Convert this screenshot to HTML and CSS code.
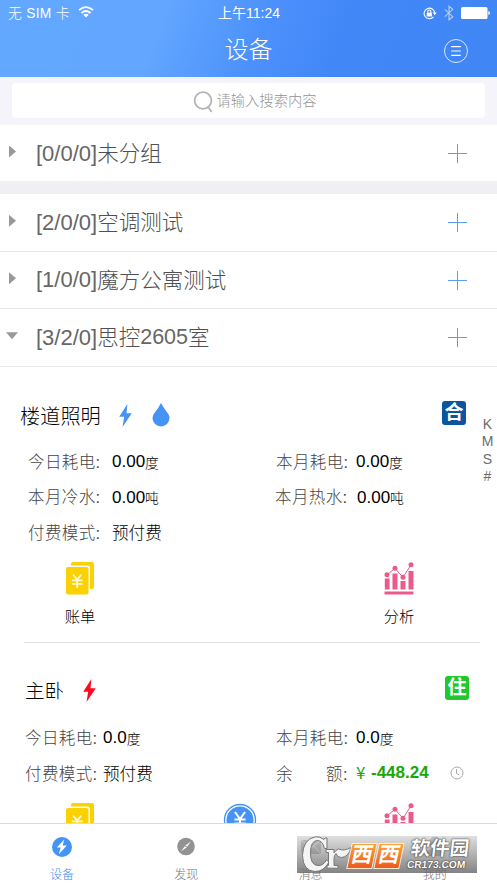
FILE: index.html
```html
<!DOCTYPE html>
<html lang="zh-CN">
<head>
<meta charset="utf-8">
<title>设备</title>
<link rel="stylesheet" href="styles.css">
</head>
<body>
<svg class="defs" aria-hidden="true">
  <symbol id="bolt" viewBox="0 0 12 22"><path d="M7.8 0 0 12.2h4.7L3.2 22 12 8.8H7z"/></symbol>
  <symbol id="bill" viewBox="0 0 28 33">
    <path fill="#fcd100" d="M7 0h19q2 0 2 2v23q0 2-2 2h-2V6q0-2.500-2.500-2.500H5V2q0-2 2-2z"/>
    <rect fill="#fcd100" y="5" width="22.500" height="27.500" rx="2"/>
    <path fill="none" stroke="#fff9dc" stroke-width="1.800" d="m7 12.500 4.200 5 4.200-5M11.200 17.500V26M5.800 18.300h10.800M5.800 21.800h10.800"/>
  </symbol>
  <symbol id="chart" viewBox="0 0 30 33">
    <path fill="#ec5a8c" d="M.8 16.500h4.800V27.500H.8zM8.500 11.500h5V27.500h-5zM16.500 19h5v8.500h-5zM24.500 9h5v18.500h-5zM.5 29.500h29V32.500H.5z"/>
    <path fill="none" stroke="#ec5a8c" d="m3 12.800 8-6.500 8 9 8-12.500"/>
    <g fill="#ec5a8c"><circle cx="3" cy="12.800" r="2.500"/><circle cx="11" cy="6.200" r="2.500"/><circle cx="19" cy="15.200" r="2.500"/><circle cx="27" cy="2.700" r="2.500"/></g>
  </symbol>
</svg>
<div class="app">
  <header class="header">
    <div class="status">
      <div class="carrier"><span>无 SIM 卡</span>
        <svg width="16" height="12" viewBox="0 0 16 12" fill="none" stroke="#fff" stroke-width="1.800"><path d="M1 4.200Q8-2 15 4.200M3.500 7Q8 3 12.500 7"/><path fill="#fff" stroke="none" d="M5.300 8.700Q8 6.600 10.700 8.700L8 11.500z"/></svg>
      </div>
      <div class="time">上午11:24</div>
      <div class="indicators">
        <svg width="14" height="13" viewBox="0 0 14 13" fill="none" stroke="#fff" stroke-width="1.100"><path d="M10.500 9.800A5.300 5.300 0 1 1 11.700 6"/><path fill="#fff" stroke="none" d="M9.700 5.500h4L11.700 8.300zM3.700 5.800h5.200v3.700H3.700z"/><path d="M4.800 6V4.500a1.500 1.500 0 0 1 3 0V6"/></svg>
        <svg class="bt" width="10" height="16" viewBox="0 0 10 16" fill="none" stroke="#fff" stroke-width="1.100"><path d="m.8 4.300 8 7.400L5 14.800V1.200l3.800 3.100-8 7.400"/></svg>
        <svg width="29" height="12" viewBox="0 0 29 12" fill="#fff"><rect width="26.500" height="12" rx="1.500"/><path d="M27.300 4q1.700.5 1.700 2t-1.700 2z"/></svg>
      </div>
    </div>
    <div class="titlebar">
      <h1>设备</h1>
      <svg width="26" height="26" viewBox="0 0 26 26" fill="none" stroke="#fff"><circle cx="13" cy="13" r="11.500" stroke-opacity=".8"/><path stroke-width="1.200" d="M8.200 8.700h9.600M8.200 13h9.600M8.200 17.300h9.600"/></svg>
    </div>
  </header>
  <div class="search"><div class="field">
    <svg width="21" height="22" viewBox="0 0 21 22" fill="none" stroke="#b3b3b3" stroke-width="1.800"><circle cx="10" cy="9.500" r="8.400"/><path d="m14.800 15.500 4 5.500"/></svg>
    <span>请输入搜索内容</span>
  </div></div>
  <ul class="groups">
    <li class="group first"><i class="arrow"></i><b>[0/0/0]</b><span>未分组</span><i class="plus"></i></li>
    <li class="group"><i class="arrow"></i><b>[2/0/0]</b><span>空调测试</span><i class="plus"></i></li>
    <li class="group"><i class="arrow"></i><b>[1/0/0]</b><span>魔方公寓测试</span><i class="plus"></i></li>
    <li class="group"><i class="arrow open"></i><b>[3/2/0]</b><span>思控</span><b class="num">2605</b><span>室</span><i class="plus"></i></li>
  </ul>
  <main class="devices">
    <section class="device">
      <div class="name"><h2>楼道照明</h2>
        <svg class="bolt" width="13" height="23"><use href="#bolt"/></svg>
        <svg class="drop" width="18" height="24" viewBox="0 0 18 24"><path fill="#4593f5" d="M9 0Q11 4 14.500 8.500T17.500 15A8.500 8.500 0 0 1 .5 15Q.5 12 3.500 8.500T9 0z"/></svg>
        <span class="tag common">合</span>
      </div>
      <div class="stats">
        <div class="stat"><label>今日耗电:</label><b>0.00</b><small>度</small></div>
        <div class="stat"><label>本月耗电:</label><b>0.00</b><small>度</small></div>
        <div class="stat"><label>本月冷水:</label><b>0.00</b><small>吨</small></div>
        <div class="stat hot"><label>本月热水:</label><b>0.00</b><small>吨</small></div>
        <div class="stat"><label>付费模式:</label><span class="mode">预付费</span></div>
      </div>
      <div class="actions">
        <a><svg width="28" height="33"><use href="#bill"/></svg><span>账单</span></a>
        <a></a>
        <a><svg width="30" height="33"><use href="#chart"/></svg><span>分析</span></a>
      </div>
    </section>
    <section class="device second">
      <div class="name"><h2>主卧</h2>
        <svg class="bolt" width="13" height="23"><use href="#bolt"/></svg>
        <span class="tag room">住</span>
      </div>
      <div class="stats">
        <div class="stat"><label>今日耗电:</label><b>0.0</b><small>度</small></div>
        <div class="stat"><label>本月耗电:</label><b>0.0</b><small>度</small></div>
        <div class="stat"><label>付费模式:</label><span class="mode">预付费</span></div>
        <div class="stat"><label class="spread"><span>余</span><span>额:</span></label><strong><em>¥</em>-448.24</strong>
          <svg class="clock" width="14" height="14" viewBox="0 0 14 14" fill="none" stroke="#aaa"><circle cx="7" cy="7" r="6"/><path d="M6.500 3v4.500L9.500 9"/></svg></div>
      </div>
      <div class="actions">
        <a><svg width="28" height="33"><use href="#bill"/></svg></a>
        <a><svg width="34" height="34" viewBox="0 0 34 34"><circle cx="17" cy="17" r="15.500" fill="#fff" stroke="#4593f5" stroke-width="1.300"/><circle cx="17" cy="17" r="13.500" fill="#4593f5"/><path fill="none" stroke="#fff" stroke-width="2" d="m12 9 5 7 5-7M17 16v10M11.500 16.500h11M11.500 20.500h11"/></svg></a>
        <a><svg width="30" height="33"><use href="#chart"/></svg></a>
      </div>
    </section>
  </main>
  <nav class="tabs">
    <a class="tab active"><svg width="22" height="22" viewBox="0 0 22 22"><circle cx="11" cy="11" r="10" fill="#4593f5"/><path fill="#fff" d="m13.300 3.500-7.500 8h3.900l-1.900 6.800 8-8.700h-4.200z"/></svg><span>设备</span></a>
    <a class="tab"><svg width="22" height="22" viewBox="0 0 22 22"><circle cx="11" cy="10.500" r="8.800" fill="#929292"/><path fill="#fff" d="m16 5.500-4.300 5.800-5.700 4.200 4.200-5.700z"/><circle cx="11" cy="10.500" r=".8" fill="#929292"/></svg><span>发现</span></a>
    <a class="tab"><svg width="22" height="22" viewBox="0 0 22 22"><path fill="#929292" d="M1 4h20v14H1z"/><path fill="none" stroke="#fff" d="m1 4 10 8L21 4M1 18l7-8M21 18l-7-8"/></svg><span>消息</span></a>
    <a class="tab"><svg width="22" height="22" viewBox="0 0 22 22" fill="#929292"><circle cx="11" cy="6" r="5.500"/><path d="M2 20q0-8 9-8t9 8z"/></svg><span>我的</span></a>
  </nav>
  <aside class="index"><span>K</span><span>M</span><span>S</span><span>#</span></aside>
  <div class="mark">
    <svg class="cr" width="52" height="37" viewBox="0 0 52 37">
      <g fill="#f4f4f4" stroke="#777" stroke-width="1">
        <path d="M30 2V12.500H27.500Q25.500 4.500 20.500 4.500 13.500 4.500 13.500 17T21 29.500Q26 30 29.500 24L32 26Q27 35.500 18 35.500 6 35 5.500 19.500 6 3 18.500.8 23 .3 27 3.500L28 2z"/>
        <path d="M29 13.500h8v3.300q1.500-2.500 4.500-3.800Q47 15.500 54 11.500 51.500 21 44.500 21.500 40 21.500 39 17.500 37 19 37 23v6.500h4v2.700H30V29.500h1.500V16.500H29z"/>
      </g>
    </svg>
    <span class="tile">西</span><span class="tile">西</span>
    <div class="words"><span>软件园</span><b>CR173.COM</b></div>
  </div>
</div>
</body>
</html>
```
FILE: styles.css
```css
* { box-sizing: border-box; }
body { margin: 0; background: #fff; font-family: "Liberation Sans", "Noto Sans CJK SC", sans-serif; color: #000; }
h1, h2, ul { margin: 0; padding: 0; font-weight: 300; list-style: none; }
b, small, em { font-weight: 400; font-style: normal; }
svg { display: block; flex: none; }
.defs { position: absolute; width: 0; height: 0; }
.app { position: relative; width: 497px; height: 883px; overflow: hidden; display: flex; flex-direction: column; font-weight: 300; }

.header { height: 77px; flex: none; color: #fff; background: linear-gradient(110deg, #63a8ff 0%, #62a6ff 32%, #4c91fb 52%, #4287f7 68%, #4186f5 100%); }
.status { height: 26px; display: grid; grid-template-columns: 1fr auto 1fr; align-items: center; padding: 0 7px 0 8px; font-size: 14px; }
.carrier { display: flex; align-items: center; gap: 8px; white-space: nowrap; }
.carrier span { font-size: 13.800px; letter-spacing: .3px; margin-top: -2px; }
.carrier svg { margin-top: -2px; }
.time { font-weight: 400; font-size: 14px; margin-top: -2px; }
.indicators { display: flex; justify-content: flex-end; align-items: center; gap: 7px; }
.bt { opacity: .6; }
.titlebar { height: 48px; display: grid; grid-template-columns: 1fr auto 1fr; align-items: center; padding-right: 28px; }
.titlebar h1 { grid-column: 2; font-size: 24px; line-height: 48px; margin-left: 28px; }
.titlebar svg { justify-self: end; margin-top: 1px; }

.search { height: 48px; flex: none; padding: 6px 12px 7px; background: #f4f4fa; }
.field { height: 35px; border-radius: 4px; background: #fff; display: flex; align-items: center; justify-content: center; gap: 2px; padding-left: 13px; color: #949494; font-size: 14.300px; }
.field svg { margin-top: 3px; }
.field span { margin-top: -3px; }

.groups { flex: none; }
.group { height: 57.500px; display: flex; align-items: center; padding: 1px 29px 0 9px; border-bottom: 1px solid #e9e9eb; color: #505050; font-size: 21.500px; }
.group.first { height: 69px; border-bottom: 13px solid #efeff4; }
.group span { margin-top: -4px; }
.group b { font-size: 22px; color: #666; }
.group .num { font-size: 21.500px; }
.arrow { width: 7px; height: 12px; margin: -4px 20px 0 0; background: #999; clip-path: polygon(0 0, 100% 50%, 0 100%); }
.arrow.open { width: 12px; height: 7px; margin: -4px 18px 0 -3px; clip-path: polygon(0 0, 100% 0, 50% 100%); }
.plus { width: 19px; height: 19px; margin: 0 1px 0 auto; background: linear-gradient(#5b9eef, #5b9eef) center / 19px 1px no-repeat, linear-gradient(#5b9eef, #5b9eef) center / 1px 19px no-repeat; }

.devices { flex: 1; min-height: 0; overflow: hidden; }
.device { height: 275.500px; padding: 26px 0 0; }
.name { height: 48px; padding: 0 31px 0 20px; display: flex; align-items: center; }
.name h2 { font-size: 20.200px; margin-top: -3px; }
.bolt { fill: #4593f5; margin: -2px 0 0 18px; }
.drop { margin: -3px 0 0 20px; }
.tag { width: 24px; height: 24px; margin: -7px 0 0 auto; border-radius: 3px; color: #fff; font-size: 19px; line-height: 23px; font-weight: 700; text-align: center; }
.common { background: #0c559f; }
.room { background: #20c82d; }
.stats { display: grid; grid-template-columns: 248px 1fr; grid-auto-rows: 35.500px; padding: 4px 0 0 28px; }
.stat { display: flex; align-items: center; font-size: 16.500px; white-space: nowrap; }
.stat label { width: 84px; flex: none; margin-top: -3px; color: #444; letter-spacing: .4px; }
.stat:nth-child(2n) label { width: 80px; }
.stat.hot { margin-left: -1px; }
.stat.hot label { width: 82px; }
.stat b { font-size: 17px; }
.stat small { font-size: 13.800px; font-weight: 300; margin-top: -1px; }
.mode { margin-top: -3px; font-size: 16.600px; }
.actions { display: grid; grid-template-columns: 160px 159px 160px; height: 80px; margin-top: 11px; }
.actions a { display: flex; flex-direction: column; align-items: center; font-size: 15.300px; }
.actions span { margin-top: 11px; line-height: 22px; }

.second { padding-top: 0; }
.second::before { content: ""; display: block; height: 1px; margin: 0 17px 0 24px; background: #e2e2e2; }
.second .name { height: 96px; padding: 0 28px 0 25px; }
.second h2 { font-size: 19.500px; }
.second .bolt { fill: #fb0a20; margin-left: 19px; }
.second .tag { margin-top: -7px; }
.second .stats { padding: 0 0 0 25px; margin-top: -19px; grid-template-columns: 251px 1fr; grid-auto-rows: 36px; }
.second .stat label { width: 78px; }
.second .stat:nth-child(2n) label { width: 80px; }
.second .stat .spread { display: flex; justify-content: space-between; padding-right: 8px; }
.stat strong { display: flex; align-items: center; margin-top: -2px; color: #18a80c; font-size: 17px; font-weight: 700; }
.stat em { width: 15px; font-family: "Noto Sans CJK SC", sans-serif; line-height: 20px; margin-top: -2px; }
.clock { margin: -3px 0 0 21px; }
.second .actions { margin-top: 11px; }

.tabs { height: 60px; flex: none; display: grid; grid-template-columns: repeat(4, 1fr); border-top: 1px solid #dcdcdc; background: #fff; }
.tab { display: flex; flex-direction: column; align-items: center; padding-top: 12px; color: #777; font-size: 12px; }
.tab span { margin-top: 8px; line-height: 18px; }
.tab.active { color: #3a8af2; }

.index { position: absolute; right: 1px; top: 416px; width: 17px; display: flex; flex-direction: column; align-items: center; color: #6c6c6c; font-size: 14px; line-height: 17.300px; font-weight: 400; }

.mark { position: absolute; left: 297px; top: 836px; width: 180px; height: 37px; display: flex; align-items: center; background: linear-gradient(rgba(210,210,210,.7), rgba(100,100,100,.8)); }
.cr { overflow: visible; }
.tile { width: 26px; height: 26px; margin: 3px 1px 0 0; border: 1px solid #ffe9d0; background: linear-gradient(#f9a63a, #ef5a20); transform: skewX(-12deg); color: #fff; font-size: 21px; line-height: 22px; font-weight: 700; text-align: center; }
.words { margin-left: 5px; display: flex; flex-direction: column; color: #fff; text-shadow: 0 0 2px #333, 0 0 1px #333; transform: skewX(-6deg); }
.words span { font-size: 19.500px; line-height: 19px; font-weight: 700; padding-left: 2px; white-space: nowrap; }
.words b { font-size: 10.200px; line-height: 13px; font-weight: 700; }
```
